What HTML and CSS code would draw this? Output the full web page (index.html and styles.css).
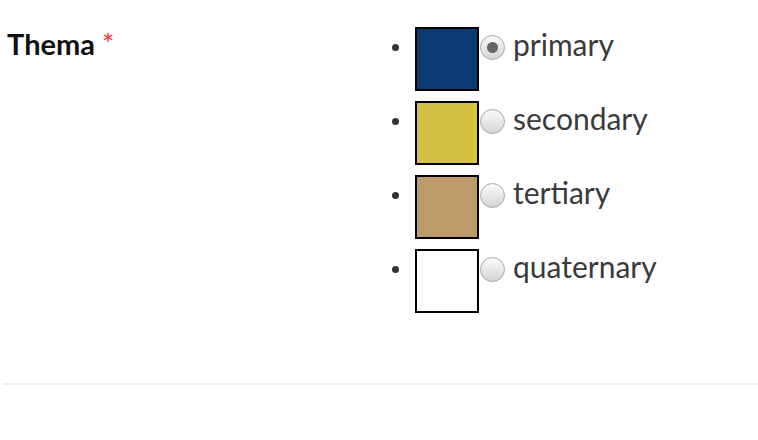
FILE: index.html
```html
<!DOCTYPE html>
<html lang="en">
<head>
    <meta charset="UTF-8">
    <meta name="viewport" content="width=device-width, initial-scale=1.0">
    <title>Thema</title>
    <link rel="stylesheet" href="styles.css">
</head>
<body>

<div class="field">
    <label class="field-label">Thema <span class="required">*</span></label>
    <ul class="options">
        <li>
            <span class="swatch primary"></span>
            <input type="radio" name="thema" id="t-primary" checked>
            <label for="t-primary">primary</label>
        </li>
        <li>
            <span class="swatch secondary"></span>
            <input type="radio" name="thema" id="t-secondary">
            <label for="t-secondary">secondary</label>
        </li>
        <li>
            <span class="swatch tertiary"></span>
            <input type="radio" name="thema" id="t-tertiary">
            <label for="t-tertiary">tertiary</label>
        </li>
        <li>
            <span class="swatch quaternary"></span>
            <input type="radio" name="thema" id="t-quaternary">
            <label for="t-quaternary">quaternary</label>
        </li>
    </ul>
</div>
<hr class="divider">

</body>
</html>
```

FILE: styles.css
```css
body {
    font-family: Lato, 'Open Sans', sans-serif;
    margin: 0;
    background-color: #fff;
    color: #333;
}
.field {
    display: grid;
    grid-template-columns: 385px 1fr;
    padding: 27px 0 0 7px;
}
.field-label {
    font-size: 29px;
    font-weight: bold;
    color: #111;
    margin-top: -1px;
}
.required {
    color: #f33;
    font-weight: normal;
}
.options {
    list-style: none;
    margin: 0;
    padding: 0;
}
.options li {
    display: flex;
    align-items: flex-start;
    margin-bottom: 10px;
}
.options li::before {
    content: "";
    width: 7px;
    height: 7px;
    border-radius: 50%;
    background-color: #333;
    margin: 17px 16px 0 0;
}
.swatch {
    width: 60px;
    height: 60px;
    border: 2px solid #000;
}
.primary { background-color: #0c3b73; }
.secondary { background-color: #d5c144; }
.tertiary { background-color: #bd9a69; }
.quaternary { background-color: #fff; }
.options input {
    appearance: none;
    -webkit-appearance: none;
    width: 25px;
    height: 25px;
    margin: 8px 8px 0 1px;
    border: 1px solid #a9a9a9;
    border-radius: 50%;
    background: linear-gradient(#fbfbfb, #d4d4d4);
    box-sizing: border-box;
    display: flex;
    align-items: center;
    justify-content: center;
}
.options input:checked::after {
    content: "";
    width: 11px;
    height: 11px;
    border-radius: 50%;
    background-color: #666;
}
.options label {
    font-size: 30px;
    color: #3a3a3a;
    margin-top: -1px;
}
.divider {
    border: none;
    border-top: 2px solid #eee;
    margin: 60px 0 0 3px;
}
```
